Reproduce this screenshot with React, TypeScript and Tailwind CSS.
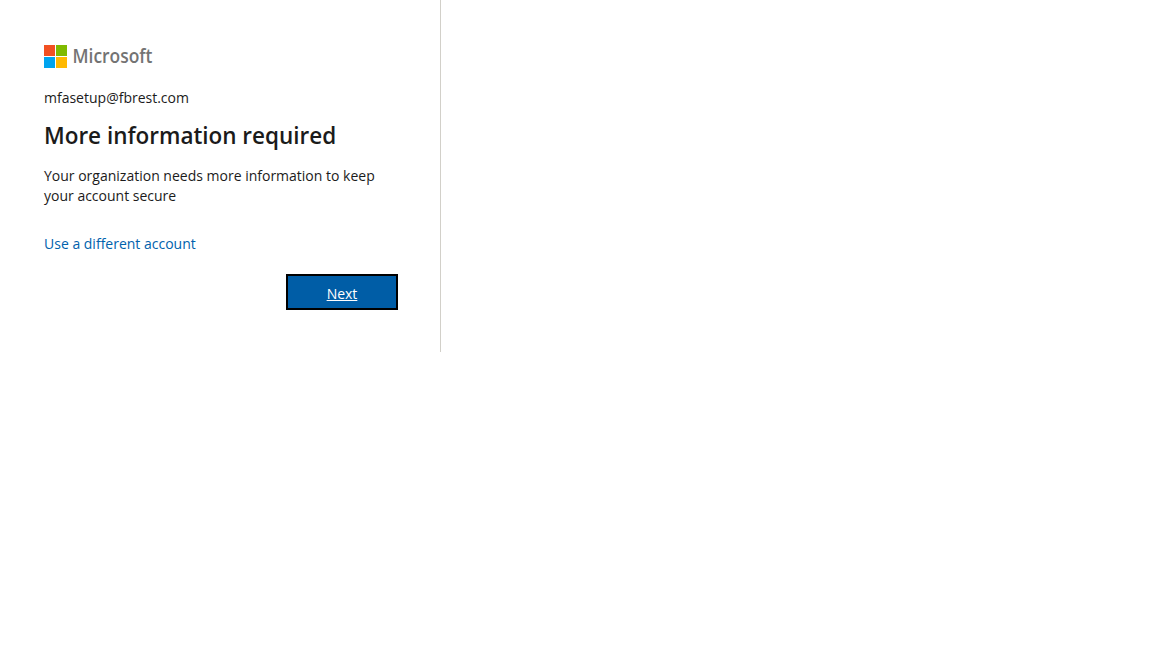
import React from "react";

function MicrosoftLogo() {
    return (
        <svg width="120" height="24" viewBox="0 0 120 24" role="img" aria-label="Microsoft">
            <rect x="0" y="1" width="11" height="11" fill="#f25022" />
            <rect x="12" y="1" width="11" height="11" fill="#7fba00" />
            <rect x="0" y="13" width="11" height="11" fill="#00a4ef" />
            <rect x="12" y="13" width="11" height="11" fill="#ffb900" />
            <text x="28.5" y="18.5" fontSize="19" fontWeight="600" fill="#737373" textLength="80" lengthAdjust="spacingAndGlyphs">
                Microsoft
            </text>
        </svg>
    );
}

export default function App() {
    return (
        <main className="min-h-screen bg-white font-['Open_Sans','Noto_Sans',sans-serif] text-[#1b1b1b]">
            <section className="h-[352px] w-[441px] border-r border-[#d2d0c9] p-11">
                <MicrosoftLogo />

                {/* Signed in account */}
                <div className="mt-4 h-6 text-sm leading-[27px]">
                    <span>mfasetup@fbrest.com</span>
                </div>

                <h1 className="mt-3 h-8 text-[22.5px] leading-8 font-semibold tracking-[-0.02px] whitespace-nowrap">
                    <span>More information required</span>
                </h1>

                <p className="mt-[14px] text-sm leading-5">
                    <span className="whitespace-nowrap">Your organization needs more information to keep</span>
                    <br />
                    <span>your account secure</span>
                </p>

                <a href="#" className="mt-7 block text-sm leading-5 text-[#0062ad]">
                    Use a different account
                </a>

                {/* Primary action */}
                <div className="mt-5 flex justify-end">
                    <button
                        type="button"
                        className="mr-[-2px] h-9 w-28 border-2 border-black bg-[#005da6] pt-1 text-sm leading-5 text-white underline"
                    >
                        Next
                    </button>
                </div>
            </section>
        </main>
    );
}
